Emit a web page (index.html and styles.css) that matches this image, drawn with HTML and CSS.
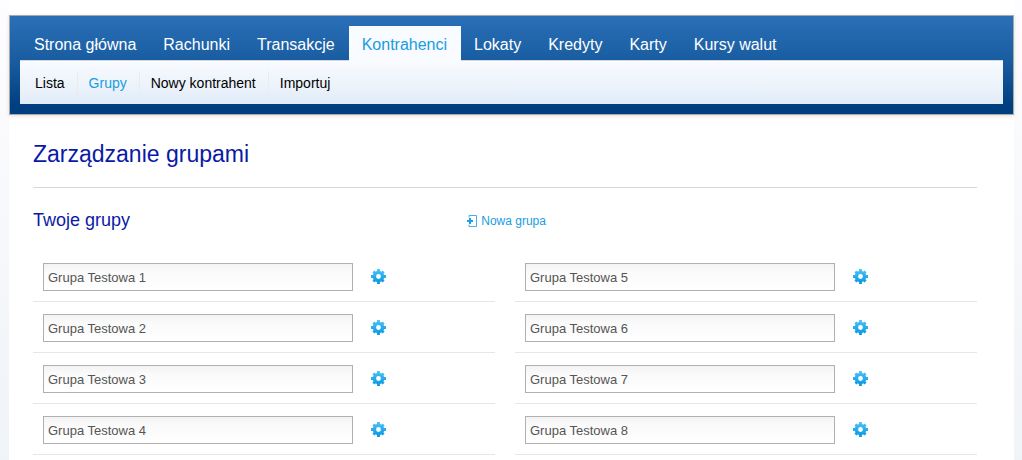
FILE: index.html
```html
<!DOCTYPE html>
<html lang="pl">
<head>
<meta charset="utf-8">
<title>Zarządzanie grupami</title>
<link rel="stylesheet" href="styles.css">
</head>
<body>
<svg class="sprite" aria-hidden="true">
  <defs>
    <linearGradient id="blue" gradientUnits="userSpaceOnUse" x1="0" y1="0" x2="0" y2="15">
      <stop offset="0" stop-color="#4cc3fa"/>
      <stop offset="1" stop-color="#0595e0"/>
    </linearGradient>
    <symbol id="gear" viewBox="0 0 15 15">
      <circle cx="7.5" cy="7.5" r="4.1" fill="none" stroke="url(#blue)" stroke-width="3.4"/>
      <path fill="none" stroke="url(#blue)" stroke-width="2.8" d="M7.500 0v3.500M7.500 11.500V15M0 7.500h3.500M11.500 7.500H15M2.400 2.400l2.400 2.400M10.200 10.200l2.400 2.400M2.400 12.600l2.400-2.400M10.200 4.800l2.400-2.400"/>
    </symbol>
  </defs>
</svg>
<div class="sheet">
  <header class="menu">
    <nav class="tabs">
      <a class="tab" href="#">Strona główna</a>
      <a class="tab" href="#">Rachunki</a>
      <a class="tab" href="#">Transakcje</a>
      <a class="tab tab-active" href="#">Kontrahenci</a>
      <a class="tab" href="#">Lokaty</a>
      <a class="tab" href="#">Kredyty</a>
      <a class="tab" href="#">Karty</a>
      <a class="tab" href="#">Kursy walut</a>
    </nav>
    <nav class="subtabs">
      <a class="subtab" href="#">Lista</a>
      <a class="subtab subtab-active" href="#">Grupy</a>
      <a class="subtab" href="#">Nowy kontrahent</a>
      <a class="subtab" href="#">Importuj</a>
    </nav>
  </header>
  <main class="content">
    <h1 class="title">Zarządzanie grupami</h1>
    <div class="section-head">
      <h2 class="subtitle">Twoje grupy</h2>
      <a class="new-group" href="#">
        <svg class="new-icon" viewBox="0 0 11 12" aria-hidden="true"><path d="M2 2.500V.5h7.500v11H2v-2" fill="none" stroke="#3fb2ec"/><path d="M0 5h2V3h2v2h2v2H4v2H2V7H0z" fill="#1c9fe3"/></svg>
        <span>Nowa grupa</span>
      </a>
    </div>
    <div class="groups">
      <div class="group"><input class="name" type="text" aria-label="Nazwa grupy 1" value="Grupa Testowa 1"><button class="settings" type="button" aria-label="Ustawienia grupy 1"><svg class="gear"><use href="#gear"/></svg></button></div>
      <div class="group"><input class="name" type="text" aria-label="Nazwa grupy 5" value="Grupa Testowa 5"><button class="settings" type="button" aria-label="Ustawienia grupy 5"><svg class="gear"><use href="#gear"/></svg></button></div>
      <div class="group"><input class="name" type="text" aria-label="Nazwa grupy 2" value="Grupa Testowa 2"><button class="settings" type="button" aria-label="Ustawienia grupy 2"><svg class="gear"><use href="#gear"/></svg></button></div>
      <div class="group"><input class="name" type="text" aria-label="Nazwa grupy 6" value="Grupa Testowa 6"><button class="settings" type="button" aria-label="Ustawienia grupy 6"><svg class="gear"><use href="#gear"/></svg></button></div>
      <div class="group"><input class="name" type="text" aria-label="Nazwa grupy 3" value="Grupa Testowa 3"><button class="settings" type="button" aria-label="Ustawienia grupy 3"><svg class="gear"><use href="#gear"/></svg></button></div>
      <div class="group"><input class="name" type="text" aria-label="Nazwa grupy 7" value="Grupa Testowa 7"><button class="settings" type="button" aria-label="Ustawienia grupy 7"><svg class="gear"><use href="#gear"/></svg></button></div>
      <div class="group"><input class="name" type="text" aria-label="Nazwa grupy 4" value="Grupa Testowa 4"><button class="settings" type="button" aria-label="Ustawienia grupy 4"><svg class="gear"><use href="#gear"/></svg></button></div>
      <div class="group"><input class="name" type="text" aria-label="Nazwa grupy 8" value="Grupa Testowa 8"><button class="settings" type="button" aria-label="Ustawienia grupy 8"><svg class="gear"><use href="#gear"/></svg></button></div>
    </div>
  </main>
</div>
</body>
</html>
```

FILE: styles.css
```css
* {
  box-sizing: border-box;
}

body {
  margin: 0;
  padding: 0 8px 0 9px;
  min-height: 100vh;
  background: linear-gradient(#fdfdff, #f7f8fb 50%, #eff4f8);
  font-family: "Liberation Sans", Arial, sans-serif;
}

a {
  color: inherit;
  text-decoration: none;
}

.sprite {
  position: absolute;
  width: 0;
  height: 0;
}

.sheet {
  min-height: 100vh;
  padding-top: 15px;
  background: #fff;
}

.menu {
  padding: 10px;
  border: 1px solid #a9a9a9;
  background: linear-gradient(#2a70b8, #175a9e 50%, #003f7f 92%);
  box-shadow: 0 1px 4px rgba(0, 0, 0, 0.12);
}

.tabs {
  display: flex;
}

.tab {
  padding: 0 14px 0 13px;
  font-size: 16px;
  line-height: 38px;
  height: 34px;
  color: #fff;
}

.tab:first-child {
  padding-left: 14px;
}

.tab-active {
  height: 35px;
  margin-bottom: -1px;
  background: #f8fbff;
  color: #1a9ce0;
}

.subtabs {
  display: flex;
  align-items: flex-start;
  padding: 10px 4px 3px;
  border-top: 1px solid #d3d8de;
  background: linear-gradient(#f8fbff, #edf3fb 55%, #e0ecf8);
}

.subtab {
  padding: 0 12px 0 11px;
  font-size: 14px;
  line-height: 24px;
  height: 30px;
  color: #000;
}

.subtab + .subtab {
  border-left: 1px solid #e9ebee;
}

.subtab-active {
  color: #1a9ce0;
}

.content {
  padding: 24px 37px 0 24px;
}

.title {
  margin: 0;
  padding-bottom: 18px;
  border-bottom: 1px solid #d8d8d8;
  font-size: 23px;
  line-height: 30px;
  font-weight: 400;
  color: #0a1aa6;
}

.section-head {
  display: grid;
  grid-template-columns: 46% 1fr;
  align-items: center;
  padding: 20px 0 19px;
}

.subtitle {
  margin: 0;
  font-size: 18px;
  line-height: 24px;
  font-weight: 400;
  color: #0a1aa6;
}

.new-group {
  display: flex;
  align-items: center;
  gap: 3px;
  padding-top: 2px;
  font-size: 12px;
  line-height: 16px;
  color: #1a9ce0;
}

.new-icon {
  width: 11px;
  height: 12px;
}

.groups {
  display: grid;
  grid-template-columns: 1fr 1fr;
  column-gap: 20px;
}

.group {
  display: flex;
  align-items: center;
  gap: 18px;
  padding: 12px 10px 10px;
  border-bottom: 1px solid #e6e6e6;
}

.name {
  flex: 0 1 310px;
  min-width: 0;
  height: 28px;
  padding: 0 4px;
  border: 1px solid #b0b0b0;
  border-radius: 0;
  background: linear-gradient(#f3f3f3, #fafafa 30%, #fff);
  font: 13px "Liberation Sans", Arial, sans-serif;
  color: #555;
}

.settings {
  display: flex;
  padding: 0 0 1px;
  border: 0;
  background: none;
}

.gear {
  width: 15px;
  height: 15px;
}
```
